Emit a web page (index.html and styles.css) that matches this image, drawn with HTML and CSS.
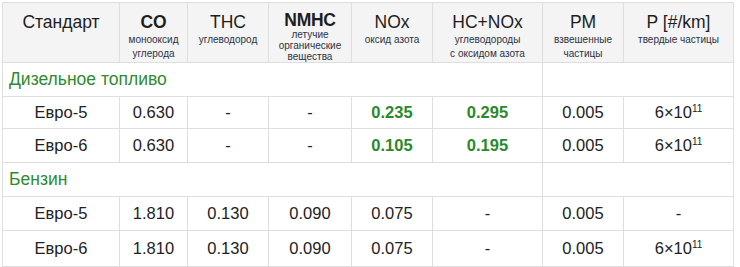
FILE: index.html
```html
<!DOCTYPE html>
<html lang="ru">
<head>
<meta charset="utf-8">
<link rel="stylesheet" href="styles.css">
</head>
<body>
<table class="norms">
  <colgroup>
    <col class="c1"><col class="c2"><col class="c3"><col class="c4"><col class="c5"><col class="c6"><col class="c7"><col class="c8">
  </colgroup>
  <thead>
    <tr class="head">
      <th><div class="t">Стандарт</div></th>
      <th><div class="t bold">CO</div><div class="s">монооксид<br>углерода</div></th>
      <th><div class="t">THC</div><div class="s">углеводород</div></th>
      <th class="tall"><div class="t semi">NMHC</div><div class="s tight">летучие<br>органические<br>вещества</div></th>
      <th><div class="t">NOx</div><div class="s">оксид азота</div></th>
      <th><div class="t">HC+NOx</div><div class="s">углеводороды<br>с оксидом азота</div></th>
      <th><div class="t">PM</div><div class="s">взвешенные<br>частицы</div></th>
      <th><div class="t">P [#/km]</div><div class="s">твердые частицы</div></th>
    </tr>
  </thead>
  <tbody>
    <tr class="cat r1"><td colspan="6">Дизельное топливо</td><td colspan="2"></td></tr>
    <tr class="r2"><td>Евро-5</td><td>0.630</td><td>-</td><td>-</td><td class="g">0.235</td><td class="g">0.295</td><td>0.005</td><td>6×10<sup>11</sup></td></tr>
    <tr class="r3"><td>Евро-6</td><td>0.630</td><td>-</td><td>-</td><td class="g">0.105</td><td class="g">0.195</td><td>0.005</td><td>6×10<sup>11</sup></td></tr>
    <tr class="cat r3"><td colspan="6">Бензин</td><td colspan="2"></td></tr>
    <tr class="r3"><td>Евро-5</td><td>1.810</td><td>0.130</td><td>0.090</td><td>0.075</td><td>-</td><td>0.005</td><td>-</td></tr>
    <tr class="r4"><td>Евро-6</td><td>1.810</td><td>0.130</td><td>0.090</td><td>0.075</td><td>-</td><td>0.005</td><td>6×10<sup>11</sup></td></tr>
  </tbody>
</table>
</body>
</html>
```
FILE: styles.css
```css
html, body {
  margin: 0;
  padding: 0;
  background: #ffffff;
}
body {
  padding: 2px 0 0 2px;
  font-family: "Liberation Sans", Arial, sans-serif;
  color: #222222;
}
.norms {
  border-collapse: collapse;
  table-layout: fixed;
  width: 731px;
}
.c1 { width: 117px; }
.c2 { width: 68px; }
.c3 { width: 81px; }
.c4 { width: 83px; }
.c5 { width: 81px; }
.c6 { width: 110px; }
.c7 { width: 81px; }
.c8 { width: 110px; }
.norms th, .norms td {
  border: 1px solid #dedede;
  padding: 0;
  text-align: center;
}
.head th {
  background: #f4f4f4;
  height: 49px;
  vertical-align: top;
  font-weight: normal;
  padding-top: 9px;
}
.head th.tall {
  padding-top: 8px;
  height: 50px;
}
.t {
  font-size: 17.5px;
  line-height: 20px;
  color: #1e1e1e;
}
.t.bold { font-weight: bold; }
.t.semi {
  font-weight: bold;
  letter-spacing: -0.3px;
  line-height: 18px;
}
.s {
  font-size: 10px;
  line-height: 14px;
  color: #2a3344;
  margin-top: 1px;
}
.s.tight { line-height: 11px; margin-top: 0; }
.norms td {
  font-size: 16.5px;
  color: #222222;
}
.r1 td { height: 33px; }
.r2 td { height: 31px; }
.r3 td { height: 33px; }
.r4 td { height: 35px; }
.cat td {
  text-align: left;
  padding-left: 6px;
  font-size: 17.5px;
  color: #2e8b2e;
}
.norms td.g {
  color: #2a8a2a;
  font-weight: bold;
}
sup {
  font-size: 10px;
  line-height: 0;
  vertical-align: 6px;
}
```
